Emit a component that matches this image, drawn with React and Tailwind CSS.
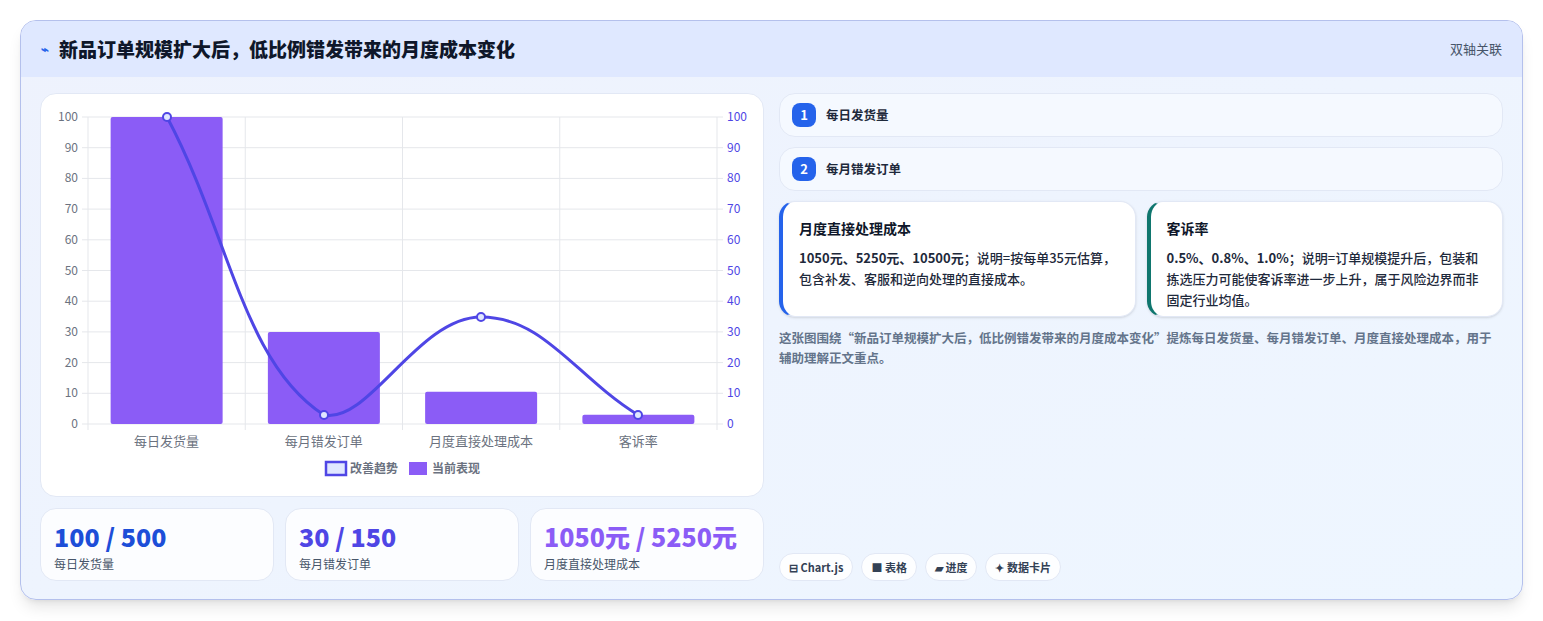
import React from "react";

const font = { fontFamily: '"Noto Sans CJK SC", "Noto Sans", sans-serif' };

const cats = ["每日发货量", "每月错发订单", "月度直接处理成本", "客诉率"];
const bars = [100, 30, 10.5, 3];
const X0 = 47, X1 = 676, Y0 = 23, Y1 = 330;
const yOf = (v) => Y1 - (v / 100) * (Y1 - Y0);

function Chart() {
  const step = (X1 - X0) / 4;
  const ticks = [0, 10, 20, 30, 40, 50, 60, 70, 80, 90, 100];
  const pts = [[126, 23], [283, 321], [440, 223], [597, 321]];
  return (
    <svg width="724" height="404" viewBox="0 0 724 404" className="block">
      {ticks.map((t) => (
        <g key={t}>
          <line x1={X0 - 6} x2={X1 + 6} y1={yOf(t)} y2={yOf(t)} stroke="#e5e7eb" />
          <text x={X0 - 10} y={yOf(t) + 4} textAnchor="end" fontSize="12" fill="#6b7280" style={font}>{t}</text>
          <text x={X1 + 10} y={yOf(t) + 4} fontSize="12" fill="#4f46e5" style={font}>{t}</text>
        </g>
      ))}
      {[0, 1, 2, 3, 4].map((i) => (
        <line key={i} x1={X0 + i * step} x2={X0 + i * step} y1={Y0} y2={Y1 + 6} stroke="#e5e7eb" />
      ))}
      {bars.map((b, i) => (
        <rect key={i} x={X0 + i * step + step / 2 - 56} y={yOf(b)} width="112" height={Y1 - yOf(b)} fill="#8b5cf6" rx="2" />
      ))}
      <path d="M126 23 C189 142 202 269 283 321 C328 330 377 223 440 223 C503 223 534 282 597 321" fill="none" stroke="#4f46e5" strokeWidth="3" />
      {pts.map(([x, y], i) => (
        <circle key={i} cx={x} cy={y} r="4" fill="#e0e7ff" stroke="#4f46e5" strokeWidth="2" />
      ))}
      {cats.map((c, i) => (
        <text key={c} x={X0 + i * step + step / 2} y="352" textAnchor="middle" fontSize="13" fill="#6b7280" style={font}>{c}</text>
      ))}
      <rect x="285" y="368" width="20" height="13" fill="#e0e7ff" stroke="#4f46e5" strokeWidth="2.5" />
      <text x="309" y="379" fontSize="12" fill="#6b7280" fontWeight="600" style={font}>改善趋势</text>
      <rect x="368" y="368" width="18" height="13" fill="#8b5cf6" />
      <text x="391" y="379" fontSize="12" fill="#6b7280" fontWeight="600" style={font}>当前表现</text>
    </svg>
  );
}

function Stat({ value, label, color }) {
  return (
    <div className="flex-1 h-[73px] rounded-2xl border border-[#e2e8f5] bg-white/80 px-[13px] pt-[10px]">
      <div className={`text-[25px] leading-[34px] font-extrabold ${color}`}>{value}</div>
      <div className="text-[12px] text-[#475569] mt-[2px]">{label}</div>
    </div>
  );
}

function Note({ title, body, strong, border }) {
  return (
    <div className={`flex-1 h-[116px] rounded-2xl bg-white border border-[#e2e8f5] border-l-4 ${border} pl-[16px] pr-[18px] pt-[16px] shadow-sm`}>
      <div className="text-[14px] font-bold text-[#0f172a]">{title}</div>
      <p className="mt-[8px] text-[13px] leading-[21px] font-medium text-[#1e293b]">
        <span className="font-bold">{strong}</span>{body}
      </p>
    </div>
  );
}

export default function App() {
  return (
    <div style={font} className="w-[1543px] h-[621px] bg-white pt-[20px] pl-[20px]">
      <div className="w-[1503px] h-[580px] rounded-2xl border border-[#b4c0ec] overflow-hidden bg-gradient-to-br from-[#eef2fd] to-[#eef6ff] shadow-lg">
        <div className="h-[56px] bg-[#dfe8ff] flex items-center justify-between pl-[20px] pr-[20px]">
          <div className="flex items-center gap-[10px]">
            <span className="text-[#2563eb] text-[13px] font-bold">⌁</span>
            <span className="text-[19px] font-extrabold text-[#0f172a]">新品订单规模扩大后，低比例错发带来的月度成本变化</span>
          </div>
          <span className="text-[13px] text-[#475569]">双轴关联</span>
        </div>
        <div className="flex gap-[15px] px-[19px] pt-[16px]">
          <div className="w-[724px] flex flex-col gap-[11px]">
            <div className="h-[404px] rounded-2xl bg-white border border-[#e2e8f5] overflow-hidden">
              <Chart />
            </div>
            <div className="flex gap-[11px]">
              <Stat value="100 / 500" label="每日发货量" color="text-[#1d4ed8]" />
              <Stat value="30 / 150" label="每月错发订单" color="text-[#4f46e5]" />
              <Stat value="1050元 / 5250元" label="月度直接处理成本" color="text-[#8b5cf6]" />
            </div>
          </div>
          <div className="w-[724px] h-[488px] flex flex-col">
            {["每日发货量", "每月错发订单"].map((t, i) => (
              <div key={t} className="h-[44px] mb-[10px] rounded-2xl bg-[#f5f9ff] border border-[#e2e8f5] flex items-center pl-[12px] gap-[10px]">
                <span className="w-[24px] h-[24px] rounded-lg bg-[#2563eb] text-white text-[13px] font-bold flex items-center justify-center">{i + 1}</span>
                <span className="text-[12.5px] font-semibold text-[#1e293b]">{t}</span>
              </div>
            ))}
            <div className="flex gap-[11px]">
              <Note title="月度直接处理成本" strong="1050元、5250元、10500元" body="；说明=按每单35元估算，包含补发、客服和逆向处理的直接成本。" border="border-l-[#2563eb]" />
              <Note title="客诉率" strong="0.5%、0.8%、1.0%" body="；说明=订单规模提升后，包装和拣选压力可能使客诉率进一步上升，属于风险边界而非固定行业均值。" border="border-l-[#0f766e]" />
            </div>
            <p className="mt-[11px] pr-[6px] text-[12.5px] leading-[20px] font-semibold text-[#64748b]">
              这张图围绕“新品订单规模扩大后，低比例错发带来的月度成本变化”提炼每日发货量、每月错发订单、月度直接处理成本，用于辅助理解正文重点。
            </p>
            <div className="mt-auto flex gap-[8px]">
              {["⊟ Chart.js", "■ 表格", "▰ 进度", "✦ 数据卡片"].map((c) => (
                <span key={c} className="h-[28px] px-[9px] rounded-full bg-white/90 border border-[#e2e8f5] text-[11px] font-bold text-[#334155] flex items-center">{c}</span>
              ))}
            </div>
          </div>
        </div>
      </div>
    </div>
  );
}
